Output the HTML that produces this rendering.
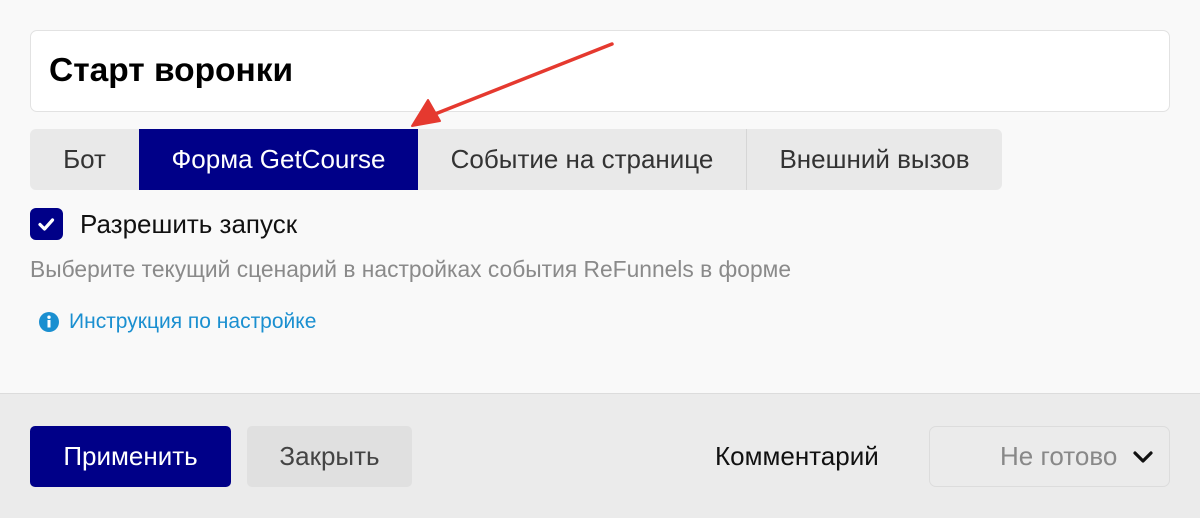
<!DOCTYPE html><html><head><meta charset="utf-8"><style>
*{box-sizing:border-box;margin:0;padding:0}
body{width:1200px;height:518px;background:#f9f9f9;font-family:"Liberation Sans",sans-serif;position:relative;overflow:hidden}
.abs{position:absolute}
.title{left:30px;top:30px;width:1140px;height:82px;background:#fff;border:1px solid #e2e2e2;border-radius:7px;font-weight:bold;font-size:33.5px;line-height:80px;padding-left:18px;color:#000}
.tabs{left:30px;top:129px;width:972px;height:61px;background:#e9e9e9;border-radius:6px;overflow:hidden;display:flex;font-size:26px;color:#333}
.tabs div{height:61px;line-height:61px;text-align:center}
.foot{left:0;top:393px;width:1200px;height:125px;background:#ebebeb;border-top:1px solid #dcdcdc}
.btn{height:61px;line-height:61px;border-radius:5px;text-align:center;font-size:26px}
</style></head><body>
<div class="abs title">Старт воронки</div>
<div class="abs tabs">
<div style="width:109px">Бот</div>
<div style="width:279px;background:#000088;color:#fff">Форма GetCourse</div>
<div style="width:329px;border-right:1px solid #d6d6d6">Событие на странице</div>
<div style="width:255px">Внешний вызов</div>
</div>
<div class="abs" style="left:30px;top:208px;width:33px;height:32px;background:#000088;border-radius:6px">
<svg width="33" height="32"><path d="M10 16.5l4.5 4.5 8-9" stroke="#fff" stroke-width="3.2" fill="none" stroke-linecap="round" stroke-linejoin="round"/></svg></div>
<div class="abs" style="left:80px;top:209px;font-size:26px;color:#111">Разрешить запуск</div>
<div class="abs" style="left:30px;top:256px;font-size:22.8px;color:#8a8a8a">Выберите текущий сценарий в настройках события ReFunnels в форме</div>
<svg class="abs" style="left:38px;top:311px" width="22" height="22"><circle cx="11" cy="11" r="10" fill="#1a8fd0"/><rect x="9.5" y="9" width="3" height="7.5" fill="#fff"/><circle cx="11" cy="6.2" r="1.7" fill="#fff"/></svg>
<div class="abs" style="left:69px;top:310px;font-size:21px;color:#1a8fd0">Инструкция по настройке</div>
<svg class="abs" style="left:0;top:0" width="700" height="140"><path d="M612 44L430 116" stroke="#e5392f" stroke-width="3.5" stroke-linecap="round"/><path d="M412 126L428 100L440 121Z" fill="#e5392f" stroke="#e5392f" stroke-width="2" stroke-linejoin="round"/></svg>
<div class="abs foot"></div>
<div class="abs btn" style="left:30px;top:426px;width:201px;background:#000088;color:#fff">Применить</div>
<div class="abs btn" style="left:247px;top:426px;width:165px;background:#e0e0e0;color:#444">Закрыть</div>
<div class="abs" style="left:715px;top:441px;font-size:26px;color:#111">Комментарий</div>
<div class="abs" style="left:929px;top:426px;width:241px;height:61px;border:1px solid #dcdcdc;border-radius:7px"></div>
<div class="abs" style="left:1000px;top:441px;font-size:26px;color:#888">Не готово</div>
<svg class="abs" style="left:1132px;top:448px" width="22" height="18"><path d="M3 5l8 8 8-8" stroke="#111" stroke-width="3.2" fill="none" stroke-linecap="round" stroke-linejoin="round"/></svg>
</body></html>
